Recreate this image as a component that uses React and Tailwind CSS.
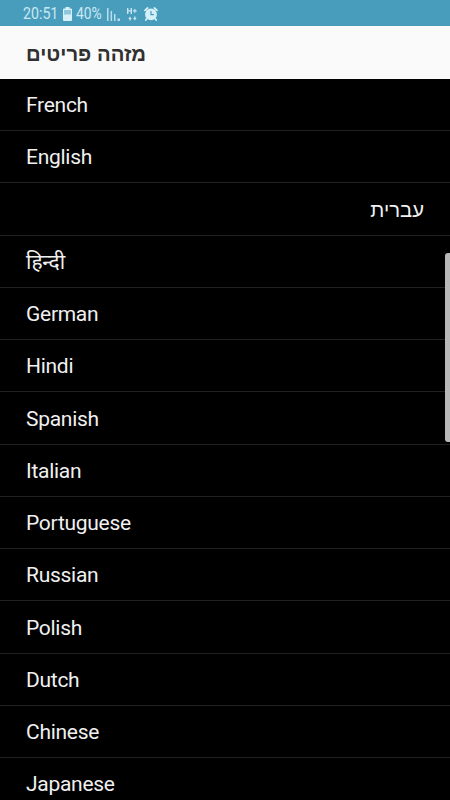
import React from 'react';

const languages = [
  { name: 'French' },
  { name: 'English' },
  { name: 'עברית', rtl: true },
  { name: 'हिन्दी' },
  { name: 'German' },
  { name: 'Hindi' },
  { name: 'Spanish' },
  { name: 'Italian' },
  { name: 'Portuguese' },
  { name: 'Russian' },
  { name: 'Polish' },
  { name: 'Dutch' },
  { name: 'Chinese' },
  { name: 'Japanese' },
];

const BatteryIcon = () => (
  <svg width="9" height="14" viewBox="0 0 9 14" className="ml-[5px]">
    <path d="M2.5 0h4v1.5H8a1 1 0 0 1 1 1V13a1 1 0 0 1-1 1H1a1 1 0 0 1-1-1V2.5a1 1 0 0 1 1-1h1.5z" fill="#d5f0f8" />
    <rect x="1" y="3" width="7" height="4.5" fill="#8fc7dc" />
  </svg>
);

const SignalIcon = () => (
  <svg width="14" height="13" viewBox="0 0 14 13" className="ml-[5px]" fill="#b9dfed">
    <rect x="0" y="0" width="1.5" height="13" />
    <rect x="3.6" y="3" width="1.5" height="10" />
    <rect x="7" y="6" width="1.5" height="7" />
    <rect x="10.5" y="10.5" width="2.5" height="2.5" />
  </svg>
);

// H+ data connection with the up/down arrows under it
const DataIcon = () => (
  <svg width="11" height="13" viewBox="0 0 11 13" className="ml-[6px]" fill="#c5e6f1">
    <path d="M0 0h1.4v2.2h2.2V0H5v6H3.6V3.5H1.4V6H0z" />
    <path d="M7.2 1h1.2v1.3h1.3v1.2H8.4v1.3H7.2V3.5H5.9V2.3h1.3z" />
    <path d="M1.2 11l1.8-2.6L4.8 11H3.7v1.5H2.3V11z" />
    <path d="M6 10l1.8 2.6L9.6 10H8.5V8.5H7.1V10z" />
  </svg>
);

const AlarmIcon = () => (
  <svg width="14" height="14" viewBox="0 0 14 14" className="ml-[6px]" fill="none" strokeLinecap="round">
    <path d="M1 3.3L3.6 1M13 3.3L10.4 1M3 11.5L1.8 13M11 11.5l1.2 1.5" stroke="#d5f0f8" strokeWidth="1.8" />
    <circle cx="7" cy="7.4" r="5.9" fill="#d5f0f8" />
    <path d="M7 4.3v3.3h2.6" stroke="#499bb9" strokeWidth="1.2" />
  </svg>
);

const StatusBar = () => (
  <div className="flex h-[26px] shrink-0 items-center bg-[#489cbc] pl-[23px] pt-[2px] text-[16.5px] text-[#c8e8f3]">
    <span className="w-[35px] origin-left scale-x-[0.86] whitespace-nowrap">20:51</span>
    <BatteryIcon />
    <span className="ml-[4px] w-[26px] origin-left scale-x-[0.84] whitespace-nowrap">40%</span>
    <SignalIcon />
    <DataIcon />
    <AlarmIcon />
  </div>
);

const LanguageRow = ({ name, rtl }) => (
  <li
    dir={rtl ? 'rtl' : 'ltr'}
    className={`flex h-[52.25px] shrink-0 items-center border-b border-[#202020] px-[26px] text-[#f0f0f0] ${
      rtl ? "pt-[2px] font-['Liberation_Sans',sans-serif] text-[20.3px]" : 'pt-[3px] text-[21px] tracking-[-0.28px]'
    }`}
  >
    {name}
  </li>
);

const App = () => {
  return (
    <div className="relative flex h-[800px] w-[450px] flex-col overflow-hidden bg-black font-['Roboto','Noto_Sans','Open_Sans','DejaVu_Sans',sans-serif]">
      <StatusBar />
      <header className="flex h-[52.75px] shrink-0 items-center bg-[#fafafa] px-[26px] pt-[3px] font-['Liberation_Sans',sans-serif] text-[20.3px] font-bold text-[#303030]">
        <h1 dir="rtl">מזהה פריטים</h1>
      </header>
      <ul className="flex flex-col">
        {languages.map((language) => (
          <LanguageRow key={language.name} name={language.name} rtl={language.rtl} />
        ))}
      </ul>
      {/* Scroll thumb */}
      <div className="absolute right-0 top-[253px] h-[189px] w-[5px] rounded-l-[3px] bg-[#b8b8b8]" />
    </div>
  );
};

export default App;
